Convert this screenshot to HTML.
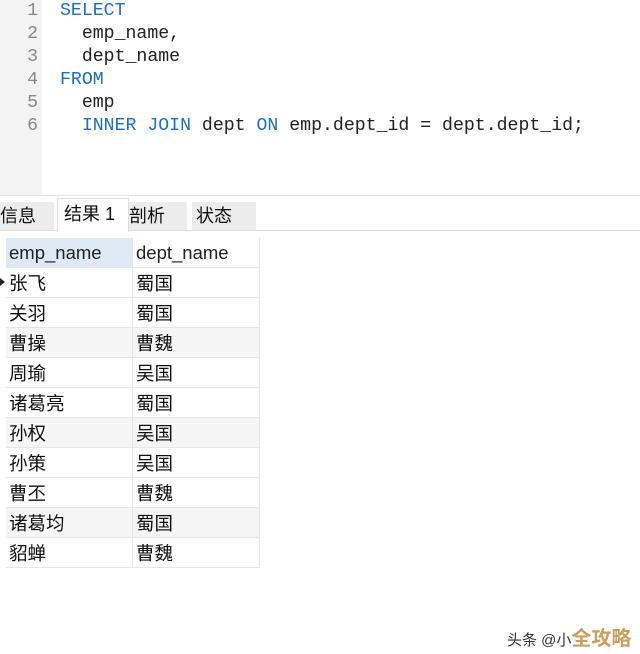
<!DOCTYPE html>
<html><head><meta charset="utf-8"><style>
body{margin:0;width:640px;height:654px;background:#fff;position:relative;overflow:hidden;font-family:"Liberation Sans","Noto Sans CJK SC",sans-serif}
.gut{position:absolute;left:0;top:0;width:42px;height:195px;background:#f3f3f3}
.code{position:absolute;left:0;top:0;font-family:"Liberation Mono","DejaVu Sans Mono",monospace;font-size:18.2px;line-height:23px}
.ln{position:absolute;left:0;width:38px;text-align:right;color:#888}
.tx{position:absolute;left:60px;white-space:pre;color:#222}
.k{color:#1e6fc0}
.sep{position:absolute;left:0;top:195px;width:640px;height:1px;background:#e4e4e4}
.tabs{position:absolute;top:200px;left:0;height:30px;width:640px;border-bottom:1px solid #ddd}
.tab{position:absolute;top:2px;height:28px;font-size:18px;line-height:28px;background:#ececec;color:#111;padding-left:0}
.tab.a{background:#fff;top:-2px;height:33px;line-height:30px;border:1px solid #ddd;border-bottom:none}
table{position:absolute;left:6px;top:238px;border-collapse:collapse;font-size:18.5px}
td{width:123px;height:29px;padding:0 0 0 3px;border-right:1px solid #e6e6e6;border-bottom:1px solid #e6e6e6;color:#111}
tr.h td{background:#dde9f5;color:#222}
tr.h td:nth-child(2){background:#fff}
tr.g td{background:#f5f5f5}
.wm{position:absolute;left:507px;top:622px;font-size:15px;color:#333}
.wm b{color:#c8a060;font-size:20px}
</style></head><body>
<div class="gut"></div>
<div class="code">
<div class="ln" style="top:0">1</div><div class="tx k" style="top:0">SELECT</div>
<div class="ln" style="top:23px">2</div><div class="tx" style="top:23px">  emp_name,</div>
<div class="ln" style="top:46px">3</div><div class="tx" style="top:46px">  dept_name</div>
<div class="ln" style="top:69px">4</div><div class="tx k" style="top:69px">FROM</div>
<div class="ln" style="top:92px">5</div><div class="tx" style="top:92px">  emp</div>
<div class="ln" style="top:115px">6</div><div class="tx" style="top:115px">  <span class="k">INNER JOIN</span> dept <span class="k">ON</span> emp.dept_id = dept.dept_id;</div>
</div>
<div class="sep"></div>
<div class="tabs">
<div class="tab" style="left:0;width:54px">信息</div>
<div class="tab a" style="left:57px;width:64px;padding-left:6px">结果 1</div>
<div class="tab" style="left:129px;width:58px">剖析</div>
<div class="tab" style="left:192px;width:60px;padding-left:4px">状态</div>
</div>
<table>
<tr class="h"><td>emp_name</td><td>dept_name</td></tr>
<tr><td>张飞</td><td>蜀国</td></tr>
<tr><td>关羽</td><td>蜀国</td></tr>
<tr class="g"><td>曹操</td><td>曹魏</td></tr>
<tr><td>周瑜</td><td>吴国</td></tr>
<tr><td>诸葛亮</td><td>蜀国</td></tr>
<tr class="g"><td>孙权</td><td>吴国</td></tr>
<tr><td>孙策</td><td>吴国</td></tr>
<tr><td>曹丕</td><td>曹魏</td></tr>
<tr class="g"><td>诸葛均</td><td>蜀国</td></tr>
<tr><td>貂蝉</td><td>曹魏</td></tr>
</table>
<div style="position:absolute;left:0;top:278px;width:0;height:0;border-top:4px solid transparent;border-bottom:4px solid transparent;border-left:5px solid #222"></div>
<div class="wm">头条 @小<b>全攻略</b></div>
</body></html>
